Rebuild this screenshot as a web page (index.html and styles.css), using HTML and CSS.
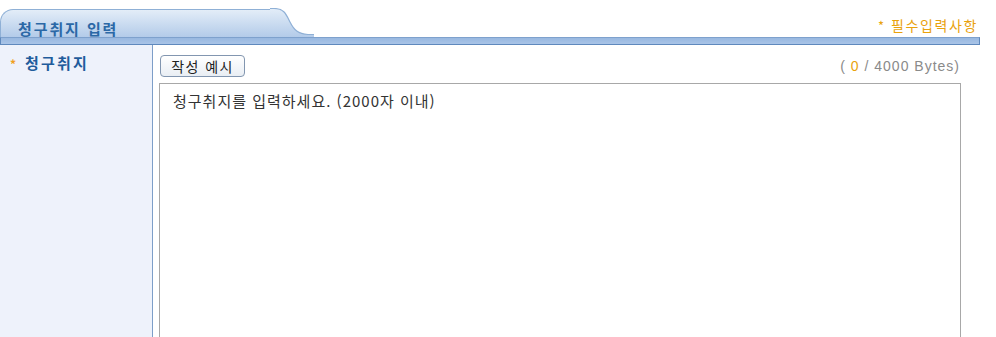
FILE: index.html
```html
<!DOCTYPE html>
<html lang="ko">
<head>
<meta charset="utf-8">
<link rel="stylesheet" href="styles.css">
</head>
<body>
<div class="page">
  <div class="header">
    <div class="tab"><span class="tab-title">청구취지 입력</span></div>
    <svg class="tab-curve" width="44" height="29" viewBox="0 0 44 29" aria-hidden="true">
      <defs>
        <linearGradient id="tg" x1="0" y1="0" x2="0" y2="1">
          <stop offset="0" stop-color="#e3edf8"/>
          <stop offset="1" stop-color="#b3cbe9"/>
        </linearGradient>
      </defs>
      <path d="M0 0.5 L4 0.5 C14 0.5 16 6 20 14 C24 22 28 26 38 26.5 L44 26.5 L44 29 L0 29 Z" fill="url(#tg)"/>
      <path d="M0 0.5 L4 0.5 C14 0.5 16 6 20 14 C24 22 28 26 38 26.5 L44 26.5" fill="none" stroke="#8fb0d6" stroke-width="1.2"/>
    </svg>
    <div class="spacer"></div>
    <div class="required"><span class="star">*</span> 필수입력사항</div>
  </div>
  <div class="bar"></div>
  <div class="content">
    <div class="label"><span class="label-star">*</span>청구취지</div>
    <div class="field">
      <div class="field-top">
        <button class="example-btn" type="button">작성 예시</button>
        <div class="counter">( <span class="count">0</span> / 4000 Bytes)</div>
      </div>
      <div class="textarea">청구취지를 입력하세요. (2000자 이내)</div>
    </div>
  </div>
</div>
</body>
</html>
```

FILE: styles.css
```css
html, body {
  margin: 0;
  padding: 0;
  background: #ffffff;
}
body {
  font-family: "Noto Sans CJK KR", "Noto Sans", "Liberation Sans", sans-serif;
  font-size: 13px;
  overflow: hidden;
}
.page {
  width: 996px;
  height: 337px;
}
.header {
  display: flex;
  align-items: flex-end;
  height: 37px;
}
.tab {
  width: 270px;
  height: 28px;
  box-sizing: border-box;
  border-top: 1px solid #8fb0d6;
  border-left: 1px solid #8fb0d6;
  border-top-left-radius: 13px;
  background: linear-gradient(#e3edf8, #b3cbe9);
  display: flex;
  align-items: flex-end;
  padding: 0 0 0 17px;
}
.tab-title {
  color: #2b68a6;
  font-weight: bold;
  font-size: 15px;
  letter-spacing: 1.9px;
  line-height: 16px;
}
.tab-curve {
  display: block;
}
.spacer {
  flex: 1;
}
.required {
  color: #e9a20c;
  font-size: 14px;
  line-height: 20px;
  margin-right: 18px;
  margin-bottom: 1px;
  letter-spacing: 1.6px;
}
.required .star {
  font-size: 13px;
  margin-right: 0;
}
.bar {
  height: 8px;
  margin-right: 16px;
  box-sizing: border-box;
  border: 1px solid #5f89bd;
  border-top-color: #7ea1cd;
  background: linear-gradient(#98b8e0, #a9c4e7);
}
.content {
  display: flex;
  height: 292px;
}
.label {
  width: 153px;
  background: #eef2fb;
  border-right: 1px solid #7d9ec8;
  color: #1f5c9c;
  font-weight: bold;
  font-size: 15px;
  letter-spacing: 2.2px;
  padding: 8px 0 0 10px;
  box-sizing: border-box;
  line-height: 20px;
}
.label-star {
  color: #f0a020;
  font-size: 12px;
  margin-right: 9px;
  letter-spacing: 0;
}
.field {
  flex: 1;
  padding: 10px 35px 0 6px;
  display: flex;
  flex-direction: column;
}
.field-top {
  display: flex;
  justify-content: space-between;
  align-items: center;
  height: 22px;
  margin-bottom: 6px;
}
.example-btn {
  font-family: inherit;
  font-size: 14px;
  color: #222;
  height: 22px;
  width: 85px;
  padding: 0;
  margin-left: 1px;
  border: 1px solid #8296b0;
  border-radius: 4px;
  background: linear-gradient(#ffffff, #e9eef4);
  letter-spacing: 1.4px;
  line-height: 18px;
}
.counter {
  color: #8a8a8a;
  font-family: "Liberation Sans", "Noto Sans CJK KR", sans-serif;
  font-size: 14px;
  letter-spacing: 1px;
  margin-right: 1px;
}
.count {
  color: #e9a20c;
}
.textarea {
  flex: 1;
  border: 1px solid #a8a8a8;
  border-bottom: none;
  color: #333;
  font-size: 15px;
  padding: 6px 0 0 13px;
  line-height: 22px;
  letter-spacing: 1px;
}
```
